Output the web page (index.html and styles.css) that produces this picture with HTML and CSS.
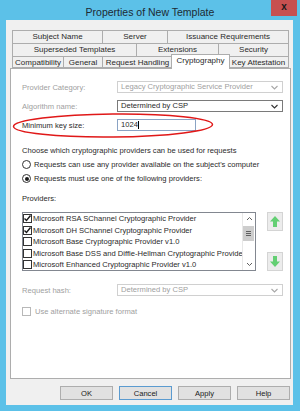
FILE: index.html
```html
<!DOCTYPE html>
<html>
<head>
<meta charset="utf-8">
<title>Properties of New Template</title>
<link rel="stylesheet" href="styles.css">
</head>
<body>
<div class="window">
  <div class="titlebar">
    <span></span>
    <span class="title">Properties of New Template</span>
    <span class="close">x</span>
  </div>

  <div class="client">
    <div class="tabs">
      <div class="tab-row row-1">
        <div class="tab">Subject Name</div>
        <div class="tab">Server</div>
        <div class="tab">Issuance Requirements</div>
      </div>
      <div class="tab-row row-2">
        <div class="tab">Superseded Templates</div>
        <div class="tab">Extensions</div>
        <div class="tab">Security</div>
      </div>
      <div class="tab-row row-3">
        <div class="tab">Compatibility</div>
        <div class="tab">General</div>
        <div class="tab">Request Handling</div>
        <div class="tab selected">Cryptography</div>
        <div class="tab">Key Attestation</div>
      </div>
    </div>

    <div class="panel">
      <div class="form-row">
        <label class="disabled">Provider Category:</label>
        <div class="combo disabled">
          <span>Legacy Cryptographic Service Provider</span>
          <svg class="chev" width="7" height="5" viewBox="0 0 7 5"><polyline points="0.5,1 3.5,4 6.5,1" /></svg>
        </div>
      </div>
      <div class="form-row">
        <label class="disabled">Algorithm name:</label>
        <div class="combo">
          <span>Determined by CSP</span>
          <svg class="chev" width="7" height="5" viewBox="0 0 7 5"><polyline points="0.5,1 3.5,4 6.5,1" /></svg>
        </div>
      </div>
      <div class="form-row">
        <label>Minimum key size:</label>
        <div class="textbox">1024<span class="caret"></span></div>
      </div>

      <p class="caption">Choose which cryptographic providers can be used for requests</p>
      <div class="option">
        <span class="radio"></span>
        <span>Requests can use any provider available on the subject's computer</span>
      </div>
      <div class="option">
        <span class="radio checked"></span>
        <span>Requests must use one of the following providers:</span>
      </div>

      <p class="caption providers-label">Providers:</p>
      <div class="providers">
        <div class="listbox">
          <ul class="items">
            <li><span class="check on"><svg width="9" height="9" viewBox="0 0 9 9"><polyline points="1.5,4.5 3.5,6.5 7.5,1.5" /></svg></span>Microsoft RSA SChannel Cryptographic Provider</li>
            <li><span class="check on"><svg width="9" height="9" viewBox="0 0 9 9"><polyline points="1.5,4.5 3.5,6.5 7.5,1.5" /></svg></span>Microsoft DH SChannel Cryptographic Provider</li>
            <li><span class="check"></span>Microsoft Base Cryptographic Provider v1.0</li>
            <li><span class="check"></span>Microsoft Base DSS and Diffie-Hellman Cryptographic Provider</li>
            <li><span class="check"></span>Microsoft Enhanced Cryptographic Provider v1.0</li>
          </ul>
          <div class="scrollbar">
            <svg class="sb-arrow" width="13" height="12" viewBox="0 0 13 12"><polyline points="4,7 6.5,4.5 9,7" /></svg>
            <div class="thumb"><span></span><span></span><span></span></div>
            <div class="track"></div>
            <svg class="sb-arrow" width="13" height="12" viewBox="0 0 13 12"><polyline points="4,5 6.5,7.5 9,5" /></svg>
          </div>
        </div>
        <div class="movers">
          <div class="mover">
            <svg width="12" height="13" viewBox="0 0 12 13"><path d="M6 1 L11 6.5 H8 V12 H4 V6.5 H1 Z" /></svg>
          </div>
          <div class="mover">
            <svg width="12" height="13" viewBox="0 0 12 13"><path d="M6 12 L11 6.5 H8 V1 H4 V6.5 H1 Z" /></svg>
          </div>
        </div>
      </div>

      <div class="form-row hash-row">
        <label class="disabled">Request hash:</label>
        <div class="combo disabled">
          <span>Determined by CSP</span>
          <svg class="chev" width="7" height="5" viewBox="0 0 7 5"><polyline points="0.5,1 3.5,4 6.5,1" /></svg>
        </div>
      </div>
      <div class="option alt-format">
        <span class="check disabled"></span>
        <span class="disabled">Use alternate signature format</span>
      </div>
    </div>

    <div class="buttons">
      <button>OK</button>
      <button class="focused">Cancel</button>
      <button>Apply</button>
      <button>Help</button>
    </div>
  </div>

  <!-- hand drawn highlight -->
  <svg class="highlight" width="204" height="28" viewBox="0 0 204 28">
    <ellipse cx="101" cy="13.5" rx="99.5" ry="11.5" transform="rotate(-0.6 101 13.5)" />
  </svg>
</div>
</body>
</html>
```

FILE: styles.css
```css
* {
    box-sizing: border-box;
}
body {
    margin: 0;
    font-family: "Liberation Sans", Arial, sans-serif;
    font-size: 7.6px;
    color: #2a2a2a;
}
.window {
    position: relative;
    width: 300px;
    height: 411px;
    background: #5cc1e8;
    display: flex;
    flex-direction: column;
}
.titlebar {
    height: 20px;
    display: grid;
    grid-template-columns: 1fr auto 1fr;
}
.title {
    padding-top: 6px;
    font-size: 10.5px;
    line-height: 13px;
    color: #1c2a33;
}
.close {
    justify-self: end;
    margin-right: 3px;
    width: 26px;
    height: 16px;
    background: #c75050;
    color: #1a1a1a;
    font-weight: bold;
    font-size: 10px;
    line-height: 14px;
    text-align: center;
}

.client {
    flex: 1;
    margin: 0 7px 6px 6px;
    background: #f0f0f0;
    padding: 10px 2px 5px 4px;
    display: flex;
    flex-direction: column;
}

/* tabs */
.tabs {
    margin: 0 2px;
}
.tab-row {
    display: grid;
}
.row-1 {
    height: 13px;
    grid-template-columns: 90px 65px 1fr;
}
.row-2 {
    height: 13px;
    grid-template-columns: 124px 82px 1fr;
}
.row-3 {
    height: 12px;
    grid-template-columns: 51px 39px 70px 57px 1fr;
}
.tab {
    border-left: 1px solid #adadad;
    border-top: 1px solid #adadad;
    background: #f0f0f0;
    text-align: center;
    font-size: 8px;
    line-height: 11px;
    white-space: nowrap;
    overflow: hidden;
}
.tab:last-child {
    border-right: 1px solid #adadad;
}
.row-3 .tab {
    border-bottom: 1px solid #adadad;
}
.tab.selected {
    position: relative;
    z-index: 1;
    margin: -2px -1px -1px -1px;
    background: #fff;
    border: 1px solid #adadad;
    border-bottom: none;
    line-height: 12px;
}
.tab.selected + .tab {
    border-left: none;
}

/* page */
.panel {
    flex: 1;
    background: #fff;
    border: 1px solid #adadad;
    padding: 12px 7px 0 11px;
}
.disabled {
    color: #a0a0a0;
}
.form-row {
    display: grid;
    grid-template-columns: 95px 1fr;
    align-items: center;
    height: 12px;
    margin-bottom: 7px;
}
.combo {
    height: 12px;
    border: 1px solid #7a7a7a;
    display: flex;
    align-items: center;
    justify-content: space-between;
    padding: 0 4px 0 3px;
    line-height: 10px;
}
.combo.disabled {
    border-color: #d0d0d0;
}
.chev {
    fill: none;
    stroke: #333;
    stroke-width: 1.1;
}
.combo.disabled .chev {
    stroke: #a8a8a8;
}
.textbox {
    width: 79px;
    height: 12px;
    border: 1px solid #8aa3c4;
    padding: 0 3px;
    line-height: 10px;
    display: flex;
    align-items: center;
}
.caret {
    width: 1px;
    height: 8px;
    background: #000;
}

.caption {
    margin: 14px 0 0;
    line-height: 11px;
}
.option {
    display: flex;
    align-items: center;
    gap: 3px;
    height: 11px;
    margin-top: 3px;
}
.radio {
    width: 9px;
    height: 9px;
    border: 1px solid #333;
    border-radius: 50%;
    display: flex;
    align-items: center;
    justify-content: center;
}
.radio.checked::after {
    content: "";
    width: 4px;
    height: 4px;
    border-radius: 50%;
    background: #1a1a1a;
}
.providers-label {
    margin-top: 9px;
}

/* provider list */
.providers {
    display: flex;
    gap: 11px;
    margin-top: 8px;
    margin-bottom: 13px;
}
.listbox {
    width: 234px;
    height: 59px;
    border: 1px solid #828790;
    display: flex;
    overflow: hidden;
}
.items {
    flex: 1;
    margin: 0;
    padding: 0;
    list-style: none;
    overflow: hidden;
}
.items li {
    height: 11.5px;
    display: flex;
    align-items: center;
    white-space: nowrap;
}
.check {
    flex: none;
    width: 9px;
    height: 9px;
    border: 1px solid #333;
    margin-right: 1px;
    background: #fff;
    display: flex;
}
.check svg {
    margin: -1px;
    fill: none;
    stroke: #1a1a1a;
    stroke-width: 1.4;
}
.check.disabled {
    border-color: #b8b8b8;
}
.scrollbar {
    flex: none;
    width: 13px;
    border-left: 1px solid #e8e8e8;
    background: #fff;
    display: flex;
    flex-direction: column;
}
.sb-arrow {
    flex: none;
    fill: none;
    stroke: #606060;
    stroke-width: 1;
}
.thumb {
    height: 15px;
    margin: 1px 1px 0 0;
    background: #cdcdcd;
    display: flex;
    flex-direction: column;
    align-items: center;
    justify-content: center;
    gap: 1px;
}
.thumb span {
    width: 5px;
    height: 1px;
    background: #606060;
}
.track {
    flex: 1;
}
.movers {
    display: flex;
    flex-direction: column;
    justify-content: space-between;
}
.mover {
    width: 16px;
    height: 19px;
    background: #ececec;
    border: 1px solid #d4d4d4;
    display: flex;
    align-items: center;
    justify-content: center;
}
.mover svg {
    fill: #63cf73;
}

.hash-row {
    margin-bottom: 10px;
}
.alt-format {
    margin-top: 0;
}

/* dialog buttons */
.buttons {
    display: flex;
    justify-content: flex-end;
    gap: 6px;
    margin-top: 7px;
    padding-right: 1px;
}
.buttons button {
    width: 53px;
    height: 14px;
    padding: 0;
    font: inherit;
    color: #1a1a1a;
    background: #e1e1e1;
    border: 1px solid #adadad;
}
.buttons button.focused {
    border-color: #5b9bd0;
}

.highlight {
    position: absolute;
    left: 12px;
    top: 112px;
}
.highlight ellipse {
    fill: none;
    stroke: #e01818;
    stroke-width: 1.5;
}
```
